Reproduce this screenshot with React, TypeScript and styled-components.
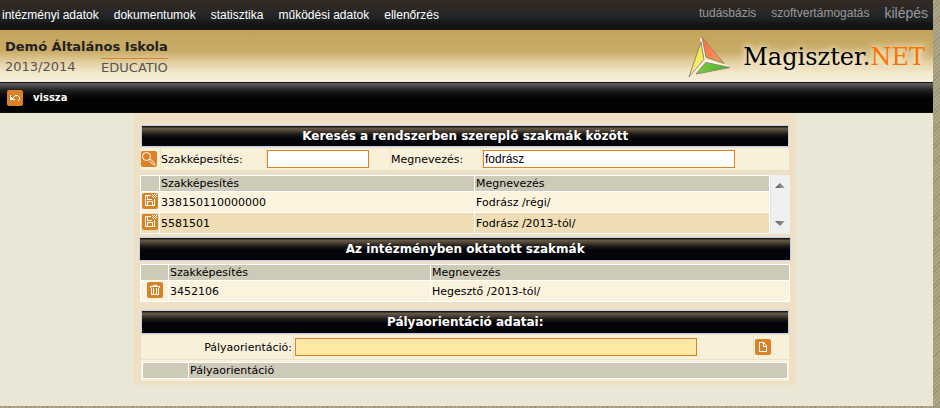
import React from "react";
import styled, { createGlobalStyle } from "styled-components";

const ORANGE = "#db8226";

const GlobalStyle = createGlobalStyle`
  *, *::before, *::after { box-sizing: border-box; }
  body {
    margin: 0;
    background: #a59b7d;
    color: #000;
    font: 11px/14px "DejaVu Sans", Verdana, sans-serif;
  }
  button, input { font: inherit; color: inherit; }
`;

const Frame = styled.div`
  min-height: 100vh;
  display: flex;
  padding: 0 7px 2px 0;
  background: repeating-linear-gradient(135deg, #9a9174 0 1px, #b0a789 1px 3px);
`;

const Page = styled.div`
  flex: 1;
  min-width: 0;
  background: #eae7d6;
`;

const TopBar = styled.div`
  display: flex;
  justify-content: space-between;
  height: 30px;
  padding: 0 5px 0 2px;
  background: linear-gradient(#342a24 0%, #2b2826 30%, #24272a 50%, #1b1d1e 70%, #131313 80%, #131313 100%);
  font-family: "Liberation Sans", Arial, sans-serif;
  font-size: 12px;
`;

const MainNav = styled.nav`
  display: flex;
  gap: 15px;
  line-height: 30px;
`;

const SideNav = styled.nav`
  display: flex;
  gap: 15px;
  line-height: 26px;
`;

const NavLink = styled.a`
  color: #fff;
  text-decoration: none;
  white-space: nowrap;
`;

const SideLink = styled(NavLink)<{ $large?: boolean }>`
  color: #999;
  font-size: ${(p) => (p.$large ? 14 : 12)}px;
`;

const Header = styled.header`
  display: flex;
  justify-content: space-between;
  height: 52px;
  padding: 0 8px 0 5px;
  border-top: 1px solid #cfa050;
  background: linear-gradient(#c4a45b 0%, #c9ac67 40%, #e2cd9d 60%, #f2e6c9 80%, #f8f0de 100%);
`;

const School = styled.div`
  align-self: start;
  padding-top: 8px;
  font-size: 13px;
  line-height: 16px;
  color: #555;
`;

const SchoolName = styled.div`
  color: #222;
  font-weight: bold;
`;

const SchoolInfo = styled.div`
  display: flex;
  justify-content: space-between;
  padding-top: 3px;
`;

const Year = styled.span`
  padding-top: 1px;
`;

const Owner = styled.span`
  border-top: 1px solid ${ORANGE};
  padding-top: 1px;
`;

const Brand = styled.div`
  display: flex;
  align-items: center;
  gap: 12px;
  color: #000;
  font: 24px/50px "DejaVu Serif", serif;
  text-shadow: 0 0 6px #fff6e0, 0 0 10px #fff6e0;
`;

const BrandAccent = styled.span`
  color: #ff7200;
`;

const ToolBar = styled.div`
  display: flex;
  align-items: center;
  height: 31px;
  padding-left: 7px;
  border-top: 1px solid #161616;
  background: linear-gradient(#606060 0, #4a4a4a 3px, #222 7px, #0c0c0c 12px, #020202 16px, #020202 29px, #1a1814 30px);
`;

const BackButton = styled.button`
  display: flex;
  align-items: center;
  gap: 10px;
  padding: 0;
  border: 0;
  background: none;
  color: #fff;
  font-size: 10px;
  font-weight: bold;
  line-height: 16px;
`;

const IconBox = styled.span`
  display: block;
  width: 16px;
  height: 16px;
  border-radius: 2px;
  background: ${ORANGE};
  svg { display: block; }
`;

const IconButton = styled(IconBox).attrs({ as: "button", type: "button" })<{ $center?: boolean }>`
  margin: ${(p) => (p.$center ? "0 auto" : "0")};
  padding: 0;
  border: 0;
`;

const Panel = styled.main`
  width: 71%;
  margin: 0 auto 0 134px;
  padding: 12px 5px 4px;
  background: #ede0c5;
`;

const Section = styled.section<{ $inset?: number; $gap?: number }>`
  margin: ${(p) => p.$gap ?? 0}px ${(p) => p.$inset ?? 0}px 0;
`;

const Title = styled.h2<{ $compact?: boolean }>`
  margin: 0;
  border: 1px solid #c3cfee;
  background: linear-gradient(#1c1814 0 1px, #6a5c49 2px, #4a4034 5px, #211c18 8px, #04040a 12px, #030308 100%);
  color: #fff;
  font-size: 12px;
  font-weight: bold;
  line-height: ${(p) => (p.$compact ? 20 : 22)}px;
  text-align: center;
`;

const FormRow = styled.form<{ $columns: string; $height: number }>`
  display: grid;
  grid-template-columns: ${(p) => p.$columns};
  column-gap: 1px;
  height: ${(p) => p.$height}px;
  margin-top: 1px;
`;

const Cell = styled.div<{ $end?: boolean; $pad?: number }>`
  display: flex;
  align-items: center;
  justify-content: ${(p) => (p.$end ? "flex-end" : "flex-start")};
  padding: 0 ${(p) => p.$pad ?? 0}px;
  background: #f9f0da;
`;

const Label = styled.label`
  padding-top: 2px;
`;

const TextInput = styled.input<{ $width: string; $highlight?: boolean }>`
  width: ${(p) => p.$width};
  height: 18px;
  padding: 0 1px;
  border: 1px solid ${ORANGE};
  border-radius: 0;
  background: ${(p) => (p.$highlight ? "#ffe8a4" : "#fff")};
  font-family: "Liberation Sans", Arial, sans-serif;
  font-size: 12px;
  outline: none;
`;

const ListBox = styled.div`
  display: flex;
  height: 59px;
`;

const Grid = styled.table`
  width: 100%;
  table-layout: fixed;
  border-collapse: separate;
  border-spacing: 1px;
  background: #fff;
`;

const Col = styled.col<{ $width?: string }>`
  width: ${(p) => p.$width ?? "auto"};
`;

const HeadCell = styled.th`
  height: 15px;
  padding: 1px 1px 0;
  background: #cdcab8;
  font-weight: normal;
  line-height: 14px;
  text-align: left;
`;

const BodyCell = styled.td<{ $alt?: boolean }>`
  height: 20px;
  padding: 2px 1px 0;
  background: ${(p) => (p.$alt ? "#eeddb5" : "#fcf3df")};
  line-height: 18px;
  vertical-align: middle;
`;

const ActionCell = styled(BodyCell)`
  padding: 1px 0 3px 1px;
`;

const Scroller = styled.div`
  flex: none;
  display: flex;
  flex-direction: column;
  justify-content: space-between;
  align-items: center;
  width: 20px;
  padding: 8px 1px 8px 0;
  border-left: 1px solid #e4e4e4;
  background: #f0f0f0;
`;

const ScrollButton = styled.button`
  width: 10px;
  height: 5px;
  padding: 0;
  border: 0;
  background: none;
  svg { display: block; }
`;

const SubPanel = styled.div`
  margin-top: 1px;
  padding: 2px 1px;
  background: #f9f0da;
`;

const Glyph = ({ d }: { d: string }) => (
  <svg width="16" height="16" viewBox="0 0 16 16" fill="none" stroke="#fff" shapeRendering="crispEdges" aria-hidden="true">
    <path d={d} />
  </svg>
);

const UndoIcon = () => (
  <Glyph d="M3.5 5v5M3 9.5h5M4 8.5h2M4 7.5h1M6 7.5h1M7 6.5h1M8 5.5h3M11 6.5h1M12.5 7v3M11 10.5h1" />
);

const SearchIcon = () => (
  <svg width="16" height="16" viewBox="0 0 16 16" fill="none" stroke="#fff" aria-hidden="true">
    <circle cx="5.5" cy="5.5" r="4" />
    <path d="M8 9.5l4.5 4.5q1.5 .5 1.5-1L9.5 8" />
  </svg>
);

const SaveIcon = () => (
  <Glyph d="M9 2.5H3.5V12.5H12.5V6M5.5 3v3.5H10M5.5 12V8.500H10.5V12M10 1.5h1M12 1.5h1M14 1.5h1M11 2.5h1M13 2.5h1M10 3.5h1M12 3.5h1M14 3.5h1M11 4.5h1M13 4.5h1" />
);

const TrashIcon = () => (
  <Glyph d="M3 4.5h10M6 3.5h4M3.5 4v2M12.5 4v2M4.5 6v7M11.5 6v7M4 12.5h8M6.5 6v6M9.5 6v6" />
);

const PageIcon = () => <Glyph d="M4.5 3v10M4 3.5h5M11.5 6v7M4 12.5h8M8.5 3v5M8 7.5h4M9 4.5h1M10 5.5h1M11 6.5h1" />;

const Arrow = ({ down }: { down?: boolean }) => (
  <svg width="10" height="5" viewBox="0 0 10 5" aria-hidden="true">
    <defs>
      <linearGradient id={down ? "arrowDown" : "arrowUp"}>
        <stop offset="0" stopColor="#555" />
        <stop offset="1" stopColor="#aaa" />
      </linearGradient>
    </defs>
    <path d={down ? "M0 0h10L5 5z" : "M0 5h10L5 0z"} fill={`url(#${down ? "arrowDown" : "arrowUp"})`} />
  </svg>
);

const Logo = () => (
  <svg width="43" height="42" viewBox="0 0 43 42" stroke="#8d8a72" strokeLinejoin="round" aria-hidden="true">
    <defs>
      <linearGradient id="red" x2="1" y2="1">
        <stop offset="0" stopColor="#ff6a35" />
        <stop offset="1" stopColor="#ff9a68" />
      </linearGradient>
      <linearGradient id="yellow" x2="0" y2="1">
        <stop offset="0" stopColor="#f6e03a" />
        <stop offset="1" stopColor="#fff08a" />
      </linearGradient>
      <linearGradient id="green">
        <stop offset="0" stopColor="#7fcb48" />
        <stop offset="1" stopColor="#42b41b" />
      </linearGradient>
    </defs>
    <path d="M13.500 2L17 24L2 40M17 24L40 31" fill="none" stroke="#fdf6e2" strokeWidth="3" />
    <path d="M14 1L18 21L36 27.500z" fill="url(#red)" />
    <path d="M13 6L16 23.500L1 41z" fill="url(#yellow)" />
    <path d="M18 26.500L42 31.500L8 38z" fill="url(#green)" />
  </svg>
);

const found = [
  { code: "338150110000000", name: "Fodrász /régi/" },
  { code: "5581501", name: "Fodrász /2013-tól/" },
];

const taught = [{ code: "3452106", name: "Hegesztő /2013-tól/" }];

const menu = ["intézményi adatok", "dokumentumok", "statisztika", "működési adatok", "ellenőrzés"];

export default function App() {
  return (
    <>
      <GlobalStyle />
      <Frame>
        <Page>
          <TopBar>
            <MainNav>
              {menu.map((item) => (
                <NavLink key={item} href="#">{item}</NavLink>
              ))}
            </MainNav>
            <SideNav>
              <SideLink href="#">tudásbázis</SideLink>
              <SideLink href="#">szoftvertámogatás</SideLink>
              <SideLink href="#" $large>kilépés</SideLink>
            </SideNav>
          </TopBar>
          <Header>
            <School>
              <SchoolName>Demó Általános Iskola</SchoolName>
              <SchoolInfo>
                <Year>2013/2014</Year>
                <Owner>EDUCATIO</Owner>
              </SchoolInfo>
            </School>
            <Brand>
              <Logo />
              <span>Magiszter.<BrandAccent>NET</BrandAccent></span>
            </Brand>
          </Header>
          <ToolBar>
            <BackButton type="button">
              <IconBox><UndoIcon /></IconBox>
              vissza
            </BackButton>
          </ToolBar>

          <Panel>
            <Section $inset={2}>
              <Title $compact>Keresés a rendszerben szereplő szakmák között</Title>
              <FormRow $columns="19px 105px 123px 91px 1fr" $height={22}>
                <Cell><IconButton aria-label="Keresés"><SearchIcon /></IconButton></Cell>
                <Cell><Label htmlFor="code">Szakképesítés:</Label></Cell>
                <Cell><TextInput id="code" $width="102px" /></Cell>
                <Cell><Label htmlFor="name">Megnevezés:</Label></Cell>
                <Cell><TextInput id="name" $width="252px" defaultValue="fodrász" /></Cell>
              </FormRow>
            </Section>

            <Section $inset={1} $gap={5}>
              <ListBox>
                <Grid>
                  <colgroup><Col $width="18px" /><Col $width="314px" /><Col /></colgroup>
                  <thead>
                    <tr><HeadCell /><HeadCell>Szakképesítés</HeadCell><HeadCell>Megnevezés</HeadCell></tr>
                  </thead>
                  <tbody>
                    {found.map((row, i) => (
                      <tr key={row.code}>
                        <ActionCell $alt={i % 2 === 1}>
                          <IconButton aria-label="Felvétel"><SaveIcon /></IconButton>
                        </ActionCell>
                        <BodyCell $alt={i % 2 === 1}>{row.code}</BodyCell>
                        <BodyCell $alt={i % 2 === 1}>{row.name}</BodyCell>
                      </tr>
                    ))}
                  </tbody>
                </Grid>
                <Scroller>
                  <ScrollButton type="button" aria-label="Fel"><Arrow /></ScrollButton>
                  <ScrollButton type="button" aria-label="Le"><Arrow down /></ScrollButton>
                </Scroller>
              </ListBox>
            </Section>

            <Section $gap={3}>
              <Title>Az intézményben oktatott szakmák</Title>
            </Section>
            <Section $inset={1} $gap={3}>
              <Grid>
                <colgroup><Col $width="27px" /><Col $width="261px" /><Col /></colgroup>
                <thead>
                  <tr><HeadCell /><HeadCell>Szakképesítés</HeadCell><HeadCell>Megnevezés</HeadCell></tr>
                </thead>
                <tbody>
                  {taught.map((row) => (
                    <tr key={row.code}>
                      <ActionCell><IconButton $center aria-label="Törlés"><TrashIcon /></IconButton></ActionCell>
                      <BodyCell>{row.code}</BodyCell>
                      <BodyCell>{row.name}</BodyCell>
                    </tr>
                  ))}
                </tbody>
              </Grid>
            </Section>

            <Section $inset={2} $gap={8}>
              <Title>Pályaorientáció adatai:</Title>
              <FormRow $columns="152px 1fr 35px" $height={24}>
                <Cell $end $pad={1}><Label htmlFor="orientation">Pályaorientáció:</Label></Cell>
                <Cell $pad={1}><TextInput id="orientation" $width="402px" $highlight /></Cell>
                <Cell $pad={1}><IconButton aria-label="Új"><PageIcon /></IconButton></Cell>
              </FormRow>
              <SubPanel>
                <Grid>
                  <colgroup><Col $width="45px" /><Col /></colgroup>
                  <thead>
                    <tr><HeadCell /><HeadCell>Pályaorientáció</HeadCell></tr>
                  </thead>
                </Grid>
              </SubPanel>
            </Section>
          </Panel>
        </Page>
      </Frame>
    </>
  );
}
